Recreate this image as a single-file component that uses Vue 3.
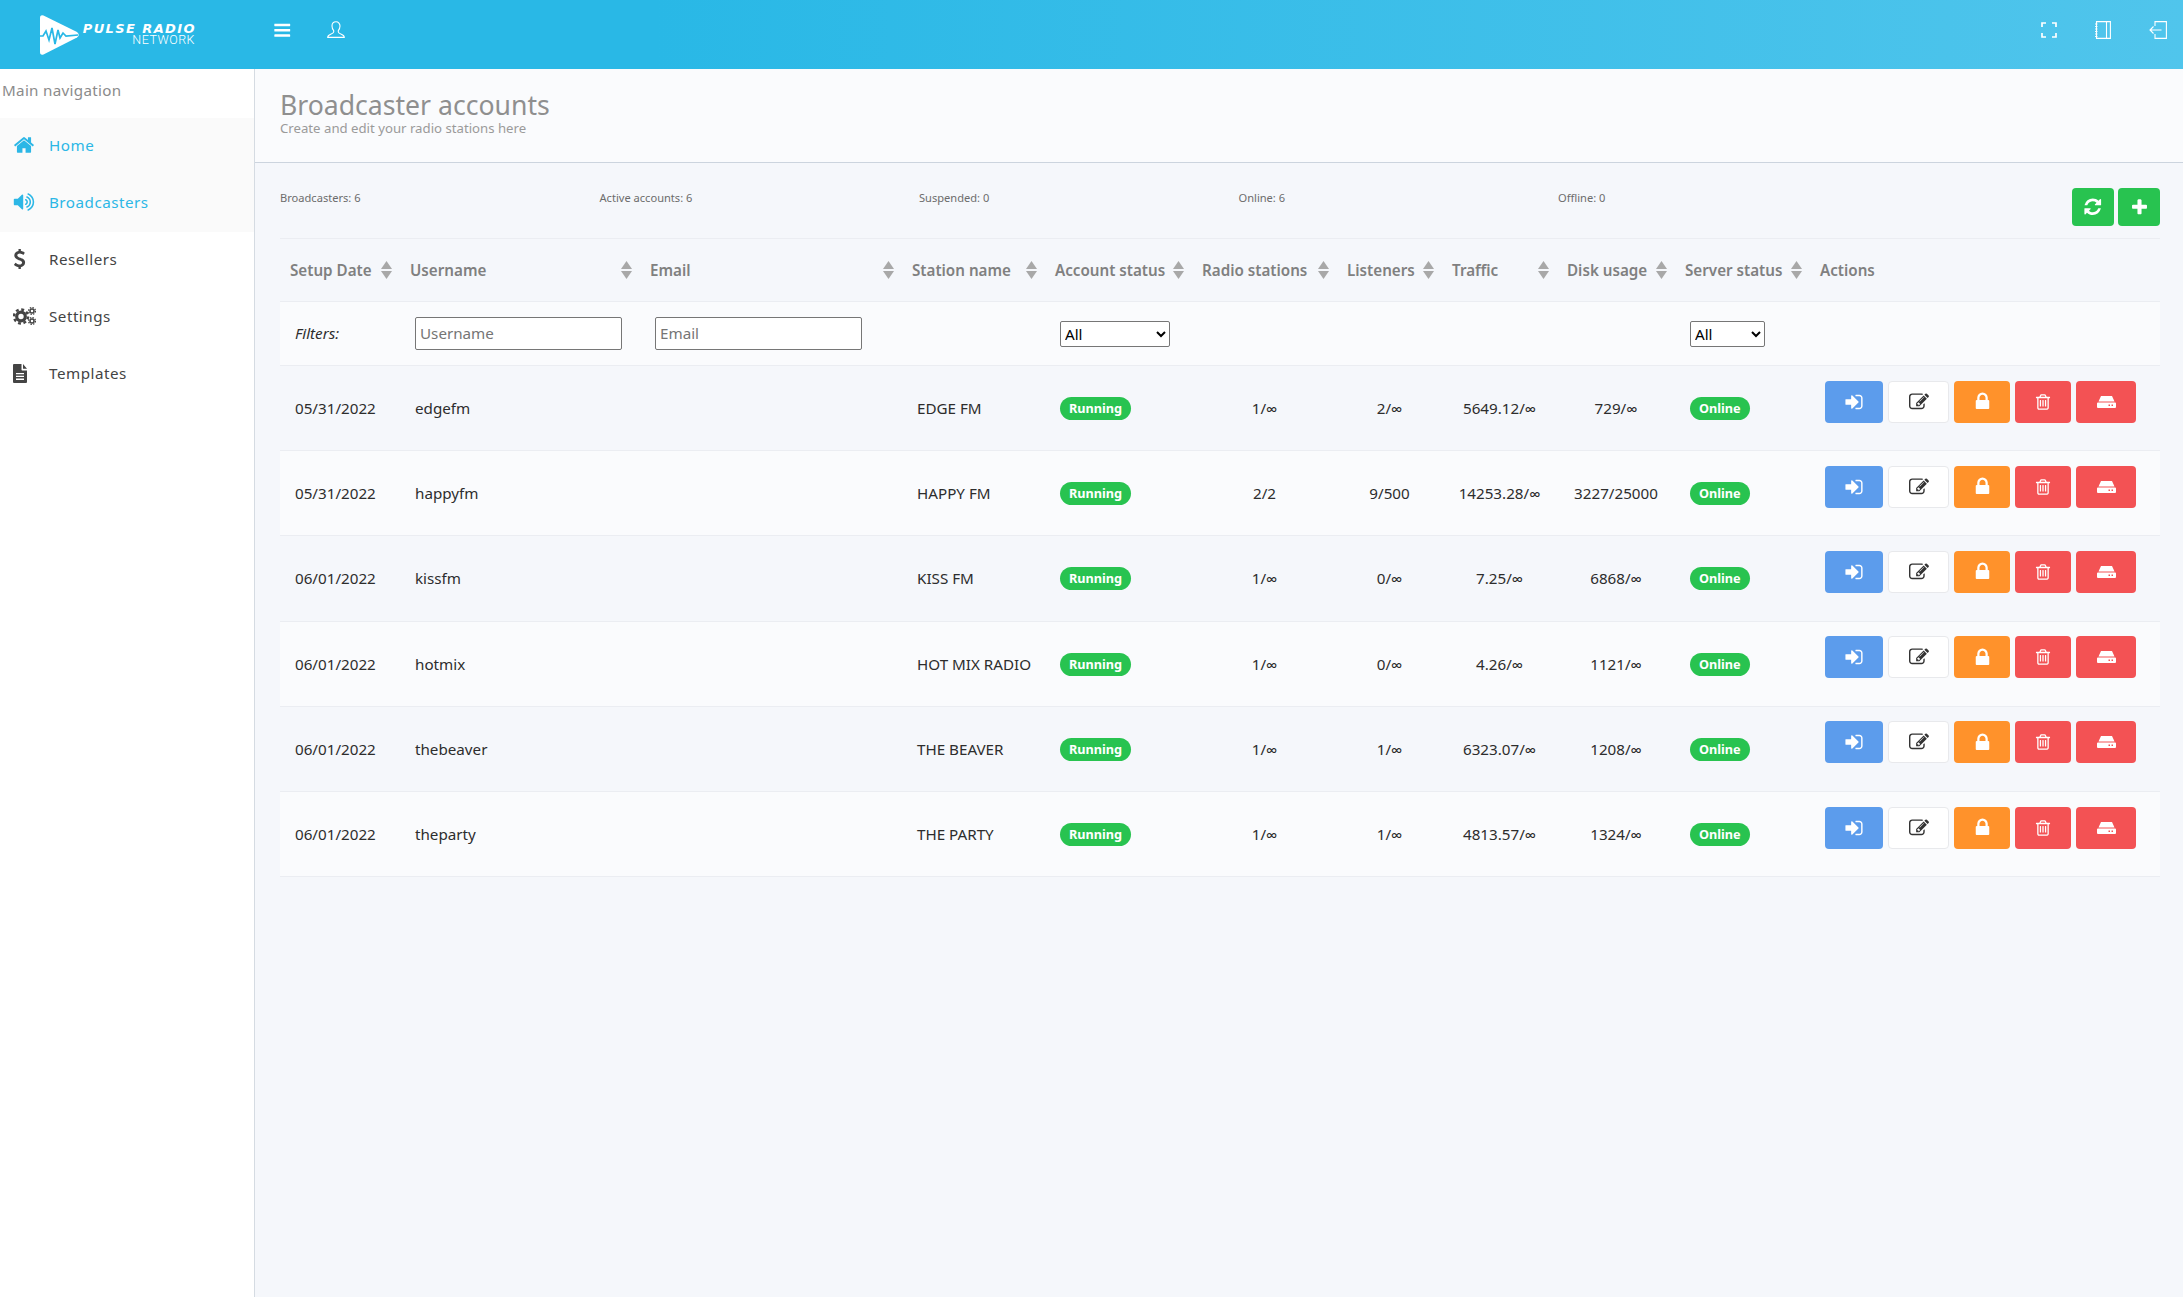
<template>
  <div class="app">
    <header class="topbar">
      <div class="logo">
        <svg class="logo-mark" viewBox="0 0 40 40" width="40" height="40">
          <path d="M3.500 .5 L37 17 Q40.500 20 37 22.500 L3.500 39.500 Q0 40.500 0 37 V3 Q0 -.5 3.500 .5 Z" fill="#fff" />
          <path d="M0 21 L3 21 L6 16 L9 25 L12 13 L15 29 L18 15 L20 23 L23 18 L26 21 L38 20" fill="none" stroke="#29b8e6" stroke-width="1.700" />
        </svg>
        <div class="logo-text">
          <div class="logo-line1">PULSE RADIO</div>
          <div class="logo-line2">NETWORK</div>
        </div>
      </div>
      <button class="top-btn bars">
        <svg viewBox="0 0 1792 1792" width="18.500" height="18.500"><path fill="#fff" d="M1664 1344v128q0 26-19 45t-45 19h-1408q-26 0-45-19t-19-45v-128q0-26 19-45t45-19h1408q26 0 45 19t19 45zm0-512v128q0 26-19 45t-45 19h-1408q-26 0-45-19t-19-45v-128q0-26 19-45t45-19h1408q26 0 45 19t19 45zm0-512v128q0 26-19 45t-45 19h-1408q-26 0-45-19t-19-45v-128q0-26 19-45t45-19h1408q26 0 45 19t19 45z" /></svg>
      </button>
      <button class="top-btn user">
        <svg viewBox="0 0 18 18" width="18" height="18" fill="none" stroke="#fff" stroke-width="1.100"><path d="M9 .8c-2.500 0-4 1.900-4 4.300 0 1.900.7 3.400 1.700 4.500v1.500c0 .8-1.400 1.500-3 2.100-1.700.7-3 1.300-3 3.200h16.600c0-1.900-1.300-2.500-3-3.200-1.600-.6-3-1.300-3-2.100V9.600c1-1.100 1.700-2.600 1.700-4.500 0-2.400-1.500-4.300-4-4.300z" /></svg>
      </button>
      <div class="top-right">
        <button class="top-btn">
          <svg viewBox="0 0 16 16" width="16" height="16" fill="none" stroke="#fff" stroke-width="1.700"><path d="M1 5V1h4M11 1h4v4M15 11v4h-4M5 15H1v-4" /></svg>
        </button>
        <button class="top-btn">
          <svg viewBox="0 0 16 18" width="16" height="18" fill="none" stroke="#fff" stroke-width="1.100"><path d="M1.500.6h13.900v16.800H1.500zM11.500.6v16.800" /><path d="M0 3h2.500M0 5.500h2.500M0 8h2.500M0 10.500h2.500M0 13h2.500M0 15.500h2.500" stroke-width=".9" /></svg>
        </button>
        <button class="top-btn">
          <svg viewBox="0 0 18 18" width="18" height="18" fill="none" stroke="#fff" stroke-width="1.100"><path d="M6 5V.6h11.400v16.800H6V13" /><path d="M12.500 9H1M4.500 5.500L1 9l3.500 3.500" /></svg>
        </button>
      </div>
    </header>

    <div class="layout">
      <aside class="sidebar">
        <div class="nav-label">Main navigation</div>
        <nav>
          <a v-for="item in navItems" :key="item.label" class="nav-item" :class="{ active: item.active }">
            <span class="nav-icon">
              <svg v-if="item.icon === 'home'" viewBox="0 0 1792 1792" width="22" height="22"><path fill="currentColor" d="M1472 992v480q0 26-19 45t-45 19h-384v-384h-256v384h-384q-26 0-45-19t-19-45v-480q0-1 .5-3t.5-3l575-474 575 474q1 2 1 6zm223-69l-62 74q-8 9-21 11h-3q-13 0-21-7l-692-577-692 577q-12 8-24 7-13-2-21-11l-62-74q-8-10-7-23.500t11-21.500l719-599q32-26 76-26t76 26l244 204v-195q0-14 9-23t23-9h192q14 0 23 9t9 23v408l219 182q10 8 11 21.500t-7 23.500z" /></svg>
              <svg v-else-if="item.icon === 'volume'" viewBox="0 0 1792 1792" width="22" height="22"><path fill="currentColor" d="M832 352v1088q0 26-19 45t-45 19-45-19l-333-333h-262q-26 0-45-19t-19-45v-384q0-26 19-45t45-19h262l333-333q19-19 45-19t45 19 19 45zm384 544q0 76-42.500 141.500t-112.500 93.500q-10 5-25 5-26 0-45-18.500t-19-45.500q0-21 12-35.500t29-25 34-23 29-36 12-56.500-12-56.500-29-36-34-23-29-25-12-35.500q0-27 19-45.500t45-18.500q15 0 25 5 70 27 112.500 93t42.500 142zm256 0q0 153-85 282.500t-225 188.500q-13 5-25 5-27 0-46-19t-19-45q0-39 39-59 56-29 76-44 74-54 115.500-135.500t41.500-173.500-41.500-173.500-115.500-135.500q-20-15-76-44-39-20-39-59 0-26 19-45t45-19q13 0 26 5 140 59 225 188.500t85 282.500zm256 0q0 230-127 422.500t-338 283.500q-13 5-26 5-26 0-45-19t-19-45q0-36 39-59 7-4 22.500-10.500t22.500-10.500q46-25 82-51 123-91 192-227t69-289-69-289-192-227q-36-26-82-51-7-4-22.500-10.500t-22.500-10.500q-39-23-39-59 0-26 19-45t45-19q13 0 26 5 211 91 338 283.500t127 422.500z" /></svg>
              <svg v-else-if="item.icon === 'usd'" viewBox="340 64 1100 1664" width="13" height="20"><path fill="currentColor" d="M1362 1185q0 153-99.500 263.500t-258.500 136.500v175q0 14-9 23t-23 9h-135q-13 0-22.500-9.500t-9.500-22.500v-175q-66-9-127.500-31t-101.500-44.500-74-48-46.500-37.500-17.500-18q-17-21-2-41l103-135q7-10 23-12 15-2 24 9l2 2q113 99 243 125 37 8 74 8 81 0 142.500-43t61.500-122q0-28-15-53t-33.500-42-58.500-37.500-66-32-80-32.500q-39-16-61.500-25t-61.500-26.500-62.500-31-56.500-35.500-53.500-42.500-43.500-49-35.500-58-21-66.500-8.500-78q0-138 98-242t255-134v-180q0-13 9.500-22.500t22.500-9.500h135q14 0 23 9t9 23v176q57 6 110.500 23t87 33.500 63.500 37.500 39 29 15 14q17 18 5 38l-81 146q-8 15-23 16-14 3-27-7-3-3-14.500-12t-39-26.500-58.500-32-74.500-26-85.500-11.500q-95 0-155 43t-60 111q0 26 8.500 48t29.500 41.500 39.500 33 56 31 60.500 27 70 27.500q53 20 81 31.500t76 35 75.500 42.500 62 50 53 63.500 31.500 76.500 13 94z" /></svg>
              <svg v-else-if="item.icon === 'cogs'" viewBox="0 0 23 18" width="23" height="18" fill="none" stroke="currentColor">
                <circle cx="8" cy="9.500" r="4.300" stroke-width="3.200" />
                <circle cx="8" cy="9.500" r="7" stroke-width="2.400" stroke-dasharray="2.900 2.600" />
                <circle cx="19" cy="4" r="2" stroke-width="1.500" />
                <circle cx="19" cy="4" r="3.400" stroke-width="1.300" stroke-dasharray="1.500 1.170" />
                <circle cx="19" cy="14" r="2" stroke-width="1.500" />
                <circle cx="19" cy="14" r="3.400" stroke-width="1.300" stroke-dasharray="1.500 1.170" />
              </svg>
              <svg v-else viewBox="0 0 14 19" width="14" height="19"><path fill="currentColor" fill-rule="evenodd" d="M1 0h7.500v5.500c0 .6.400 1 1 1H14V18q0 1-1 1H1q-1 0-1-1V1q0-1 1-1zM3 9v1.300h8V9zM3 11.800v1.300h8v-1.300zM3 14.600v1.300h8v-1.300zM10 0l4 4.800h-4z" /></svg>
            </span>
            <span>{{ item.label }}</span>
          </a>
        </nav>
      </aside>

      <main class="main">
        <div class="page-head">
          <h1 class="page-title">Broadcaster accounts</h1>
          <p class="page-sub">Create and edit your radio stations here</p>
        </div>

        <div class="content">
          <div class="stats">
            <span v-for="stat in stats" :key="stat" class="stat">{{ stat }}</span>
            <div class="stat-actions">
              <button class="btn green top">
                <svg viewBox="0 0 1792 1792" width="19.500" height="19.500"><path fill="#fff" d="M1639 1056q0 5-1 7-64 268-268 434.500t-478 166.500q-146 0-282.500-55t-243.500-157l-129 129q-19 19-45 19t-45-19-19-45v-448q0-26 19-45t45-19h448q26 0 45 19t19 45-19 45l-137 137q71 66 161 102t187 36q134 0 250-65t186-179q11-17 53-117 8-23 30-23h192q13 0 22.500 9.500t9.500 22.500zm25-800v448q0 26-19 45t-45 19h-448q-26 0-45-19t-19-45 19-45l138-138q-148-137-349-137-134 0-250 65t-186 179q-11 17-53 117-8 23-30 23h-199q-13 0-22.500-9.500t-9.500-22.500v-7q65-268 270-434.500t480-166.500q146 0 284 55.500t245 156.500l130-129q19-19 45-19t45 19 19 45z" /></svg>
              </button>
              <button class="btn green top">
                <svg viewBox="0 0 1792 1792" width="19" height="19"><path fill="#fff" d="M1600 736v192q0 40-28 68t-68 28h-416v416q0 40-28 68t-68 28h-192q-40 0-68-28t-28-68v-416h-416q-40 0-68-28t-28-68v-192q0-40 28-68t68-28h416v-416q0-40 28-68t68-28h192q40 0 68 28t28 68v416h416q40 0 68 28t28 68z" /></svg>
              </button>
            </div>
          </div>

          <table class="accounts">
            <colgroup>
              <col v-for="col in columns" :key="col.label" :style="{ width: col.width + 'px' }" />
            </colgroup>
            <thead>
              <tr>
                <th v-for="col in columns" :key="col.label">
                  <div class="th-inner">
                    <span>{{ col.label }}</span>
                    <svg v-if="col.sort" class="sort" viewBox="0 0 11 18" width="11" height="18"><path fill="#a8a8a8" d="M5.500 0L11 8H0zM5.500 18L0 10h11z" /></svg>
                  </div>
                </th>
              </tr>
            </thead>
            <tbody>
              <tr class="filters">
                <td class="filter-label">Filters:</td>
                <td><input class="filter-input" placeholder="Username" /></td>
                <td><input class="filter-input" placeholder="Email" /></td>
                <td></td>
                <td><select class="filter-select status"><option>All</option></select></td>
                <td></td>
                <td></td>
                <td></td>
                <td></td>
                <td><select class="filter-select server"><option>All</option></select></td>
                <td></td>
              </tr>
              <tr v-for="row in rows" :key="row.username" class="data-row">
                <td>{{ row.date }}</td>
                <td>{{ row.username }}</td>
                <td></td>
                <td>{{ row.station }}</td>
                <td><span class="badge">Running</span></td>
                <td class="center">{{ row.radios }}</td>
                <td class="center">{{ row.listeners }}</td>
                <td class="center">{{ row.traffic }}</td>
                <td class="center">{{ row.disk }}</td>
                <td><span class="badge">Online</span></td>
                <td class="actions-cell">
                  <div class="actions">
                    <button class="btn blue">
                      <svg viewBox="0 0 1792 1792" width="20" height="20"><path fill="#fff" d="M1312 896q0 26-19 45l-544 544q-19 19-45 19t-45-19-19-45v-288h-448q-26 0-45-19t-19-45v-384q0-26 19-45t45-19h448v-288q0-26 19-45t45-19 45 19l544 544q19 19 19 45zm352-352v704q0 119-84.500 203.500t-203.500 84.500h-320q-13 0-22.500-9.500t-9.500-22.500q0-4-1-20t-.5-26.500 3-23.500 10-19.500 20.500-6.500h320q66 0 113-47t47-113v-704q0-66-47-113t-113-47h-288-11-13t-11.500-1-11.500-3-8-5.500-7-9-2-13.500q0-4-1-20t-.5-26.500 3-23.500 10-19.500 20.500-6.500h320q119 0 203.500 84.500t84.500 203.500z" /></svg>
                    </button>
                    <button class="btn white">
                      <svg viewBox="0 0 1792 1792" width="20" height="20"><path fill="#333" d="M888 1184l116-116-152-152-116 116v56h96v96h56zm440-720q-16-16-33 1l-350 350q-17 17-1 33t33-1l350-350q17-17 1-33zm80 594v190q0 119-84.500 203.500t-203.500 84.500h-832q-119 0-203.500-84.500t-84.500-203.500v-832q0-119 84.500-203.500t203.500-84.500h832q63 0 117 25 15 7 18 23 3 17-9 29l-49 49q-14 14-32 8-23-6-45-6h-832q-66 0-113 47t-47 113v832q0 66 47 113t113 47h832q66 0 113-47t47-113v-126q0-13 9-22l64-64q15-15 35-7t20 29zm-96-738l288 288-672 672h-288v-288zm444 132l-92 92-288-288 92-92q28-28 68-28t68 28l152 152q28 28 28 68t-28 68z" /></svg>
                    </button>
                    <button class="btn orange">
                      <svg viewBox="0 0 1792 1792" width="21" height="21"><path fill="#fff" d="M640 768h512v-192q0-106-75-181t-181-75-181 75-75 181v192zm832 96v576q0 40-28 68t-68 28h-960q-40 0-68-28t-28-68v-576q0-40 28-68t68-28h32v-192q0-184 132-316t316-132 316 132 132 316v192h32q40 0 68 28t28 68z" /></svg>
                    </button>
                    <button class="btn red trash">
                      <svg viewBox="0 0 1792 1792" width="18" height="18"><path fill="#fff" d="M704 736v576q0 14-9 23t-23 9h-64q-14 0-23-9t-9-23v-576q0-14 9-23t23-9h64q14 0 23 9t9 23zm256 0v576q0 14-9 23t-23 9h-64q-14 0-23-9t-9-23v-576q0-14 9-23t23-9h64q14 0 23 9t9 23zm256 0v576q0 14-9 23t-23 9h-64q-14 0-23-9t-9-23v-576q0-14 9-23t23-9h64q14 0 23 9t9 23zm128 724v-948h-896v948q0 22 7 40.500t14.500 27 10.500 8.500h832q3 0 10.500-8.500t14.500-27 7-40.500zm-672-1076h448l-48-117q-7-9-17-11h-317q-10 2-17 11zm928 32v64q0 14-9 23t-23 9h-96v948q0 83-47 143.500t-113 60.500h-832q-66 0-113-58.500t-47-141.500v-952h-96q-14 0-23-9t-9-23v-64q0-14 9-23t23-9h309l70-167q15-37 54-63t79-26h320q40 0 79 26t54 63l70 167h309q14 0 23 9t9 23z" /></svg>
                    </button>
                    <button class="btn red hdd">
                      <svg viewBox="0 0 19 12" width="19" height="12"><path fill="#fff" fill-rule="evenodd" d="M4 0h11l2.500 5.500H1.500zM1 6.500h17q1 0 1 1V11q0 1-1 1H1q-1 0-1-1V7.500q0-1 1-1zM11.500 8.500v1.500h1.500V8.500zM14.500 8.500v1.500H16V8.500z" /></svg>
                    </button>
                  </div>
                </td>
              </tr>
            </tbody>
          </table>
        </div>
      </main>
    </div>
  </div>
</template>

<script setup>
const navItems = [
  { label: 'Home', icon: 'home', active: true },
  { label: 'Broadcasters', icon: 'volume', active: true },
  { label: 'Resellers', icon: 'usd' },
  { label: 'Settings', icon: 'cogs' },
  { label: 'Templates', icon: 'file' }
];

const stats = ['Broadcasters: 6', 'Active accounts: 6', 'Suspended: 0', 'Online: 6', 'Offline: 0'];

const columns = [
  { label: 'Setup Date', width: 120, sort: true },
  { label: 'Username', width: 240, sort: true },
  { label: 'Email', width: 262, sort: true },
  { label: 'Station name', width: 143, sort: true },
  { label: 'Account status', width: 147, sort: true },
  { label: 'Radio stations', width: 145, sort: true },
  { label: 'Listeners', width: 105, sort: true },
  { label: 'Traffic', width: 115, sort: true },
  { label: 'Disk usage', width: 118, sort: true },
  { label: 'Server status', width: 135, sort: true },
  { label: 'Actions', width: 350, sort: false }
];

const rows = [
  { date: '05/31/2022', username: 'edgefm', station: 'EDGE FM', radios: '1/∞', listeners: '2/∞', traffic: '5649.12/∞', disk: '729/∞' },
  { date: '05/31/2022', username: 'happyfm', station: 'HAPPY FM', radios: '2/2', listeners: '9/500', traffic: '14253.28/∞', disk: '3227/25000' },
  { date: '06/01/2022', username: 'kissfm', station: 'KISS FM', radios: '1/∞', listeners: '0/∞', traffic: '7.25/∞', disk: '6868/∞' },
  { date: '06/01/2022', username: 'hotmix', station: 'HOT MIX RADIO', radios: '1/∞', listeners: '0/∞', traffic: '4.26/∞', disk: '1121/∞' },
  { date: '06/01/2022', username: 'thebeaver', station: 'THE BEAVER', radios: '1/∞', listeners: '1/∞', traffic: '6323.07/∞', disk: '1208/∞' },
  { date: '06/01/2022', username: 'theparty', station: 'THE PARTY', radios: '1/∞', listeners: '1/∞', traffic: '4813.57/∞', disk: '1324/∞' }
];
</script>

<style>
html, body {
  margin: 0;
  background: #f5f7fb;
}
</style>

<style scoped>
.app {
  font-family: "Noto Sans", Lato, sans-serif;
  color: #2d2d2d;
  font-size: 15.200px;
  min-height: 1297px;
  display: flex;
  flex-direction: column;
}
.topbar {
  height: 69px;
  background: linear-gradient(90deg, #29b8e6 0%, #29b8e6 30%, #50c5ec 100%);
  display: flex;
  align-items: center;
  padding-left: 40px;
  padding-right: 16px;
  box-sizing: border-box;
}
.logo {
  display: flex;
  align-items: center;
  width: 232.750px;
  flex-shrink: 0;
}
.logo-mark {
  flex-shrink: 0;
}
.logo-text {
  margin-left: 2px;
  margin-top: -1px;
  color: #fff;
  text-align: right;
  width: 114px;
}
.logo-line1 {
  font-family: "DejaVu Sans", sans-serif;
  font-weight: 700;
  font-style: italic;
  font-size: 13px;
  line-height: 11px;
  letter-spacing: 1.400px;
  white-space: nowrap;
}
.logo-line2 {
  font-family: Roboto, sans-serif;
  font-weight: 300;
  font-size: 12.500px;
  line-height: 11px;
  letter-spacing: 0.500px;
  margin-right: 1px;
}
.top-btn {
  background: none;
  border: 0;
  padding: 0;
  display: flex;
  align-items: center;
  justify-content: center;
}
.bars {
  margin-top: -8px;
}
.user {
  margin-left: 36px;
  margin-top: -10px;
}
.top-right {
  margin-left: auto;
  display: flex;
  align-items: center;
  gap: 38px;
  margin-top: -9px;
}
.layout {
  flex: 1;
  display: flex;
}
.sidebar {
  width: 255px;
  flex-shrink: 0;
  box-sizing: border-box;
  background: #fff;
  border-right: 1px solid #d5dbe2;
}
.nav-label {
  height: 49px;
  padding: 9px 0 0 2px;
  box-sizing: border-box;
  line-height: 24px;
  color: #8b8b8b;
  letter-spacing: 0.300px;
}
.nav-item {
  height: 57px;
  display: flex;
  align-items: center;
  color: #444;
  letter-spacing: 0.500px;
}
.nav-item > span:last-child {
  margin-top: -4px;
}
.nav-item.active {
  background: #fafafa;
  color: #2cb7e6;
}
.nav-icon {
  width: 36px;
  margin-left: 13px;
  margin-top: -3px;
  display: flex;
  align-items: center;
  flex-shrink: 0;
}
.main {
  flex: 1;
  min-width: 0;
}
.page-head {
  height: 94px;
  box-sizing: border-box;
  background: #fafbfd;
  border-bottom: 1px solid #ccd4de;
  padding: 19px 0 0 25px;
}
.page-title {
  margin: 0;
  font-weight: 400;
  font-size: 26.600px;
  line-height: 35px;
  color: #8f8f8f;
}
.page-sub {
  margin: -3px 0 0;
  font-size: 13.200px;
  line-height: 16px;
  color: #9a9a9a;
}
.content {
  padding: 0 23px 0 25px;
}
.stats {
  height: 75px;
  box-sizing: border-box;
  padding-top: 25px;
  display: flex;
  align-items: flex-start;
}
.stat {
  width: 319.500px;
  font-size: 11.100px;
  line-height: 20px;
  color: #6c6c6c;
}
.stat-actions {
  margin-left: auto;
  display: flex;
  gap: 4px;
}
.accounts {
  width: 1880px;
  table-layout: fixed;
  border-collapse: collapse;
}
.accounts th {
  height: 62px;
  padding: 0 8px 0 10px;
  border-top: 1px solid #ebedf2;
  border-bottom: 1px solid #ebedf2;
  font-weight: 600;
  text-align: left;
  color: #808080;
}
.th-inner {
  display: flex;
  align-items: center;
  justify-content: space-between;
}
.sort {
  flex-shrink: 0;
}
.accounts td {
  padding: 0 15px;
  border-bottom: 1px solid #ebedf2;
  white-space: nowrap;
  box-sizing: border-box;
}
.filters td {
  height: 64px;
  background: #fafbfd;
}
.accounts td.filter-label {
  font-style: italic;
  padding-bottom: 2px;
}
.filter-input {
  width: 207px;
  height: 33px;
  box-sizing: border-box;
  font-family: inherit;
  font-size: 15.200px;
  padding: 0 4px 2px;
  display: block;
  border: 1px solid #767676;
  border-radius: 2px;
}
.filter-input::placeholder {
  color: #757575;
}
.filter-select {
  height: 26px;
  font-family: inherit;
  font-size: 15.200px;
  display: block;
  color: #000;
  background: #fff;
  border: 1px solid #767676;
  border-radius: 2px;
}
.filter-select.status {
  width: 110px;
}
.filter-select.server {
  width: 75px;
}
.data-row td {
  height: 85.200px;
}
.data-row:nth-child(odd) td {
  background: #fafbfd;
}
.center {
  text-align: center;
}
.accounts td.center {
  padding: 0;
}
.badge {
  display: inline-block;
  background: #28c350;
  color: #fff;
  font-weight: 700;
  font-size: 12.700px;
  line-height: 23px;
  padding: 0 9px;
  border-radius: 12px;
  vertical-align: middle;
  margin-top: 1px;
}
.accounts td.actions-cell {
  padding: 0 0 13px 15px;
}
.actions {
  display: flex;
  gap: 5px;
}
.btn {
  height: 42px;
  border: 0;
  border-radius: 4px;
  padding: 0;
  display: flex;
  align-items: center;
  justify-content: center;
  box-sizing: border-box;
}
.btn.top {
  width: 42px;
  height: 38px;
}
.green {
  background: #28c350;
}
.blue {
  width: 58px;
  background: #5c9cec;
}
.white {
  width: 61px;
  background: #fff;
  border: 1px solid #e8e9ec;
}
.orange {
  width: 56px;
  background: #ff922b;
}
.red {
  background: #f35254;
}
.trash {
  width: 56px;
}
.hdd {
  width: 60px;
}
</style>
